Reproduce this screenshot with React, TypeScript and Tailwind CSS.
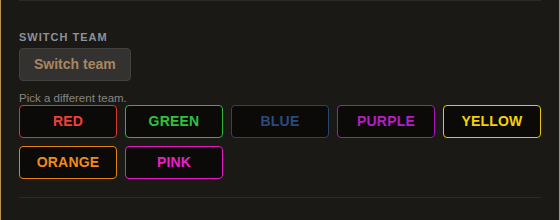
import React from 'react'

const TEAMS = [
  { name: 'RED', cls: 'border-[#d8392f] text-[#ee4136]' },
  { name: 'GREEN', cls: 'border-[#2bb637] text-[#2ec33b]' },
  { name: 'BLUE', cls: 'border-[#284470] text-[#2b4a7c]' },
  { name: 'PURPLE', cls: 'border-[#a915b8] text-[#b21fc4]' },
  { name: 'YELLOW', cls: 'border-[#e8c800] text-[#f2d300]' },
  { name: 'ORANGE', cls: 'border-[#e5820e] text-[#f28c12]' },
  { name: 'PINK', cls: 'border-[#e21cc0] text-[#ec1fc8]' },
]

export default function App() {
  return (
    <div
      className="w-[560px] h-[220px] bg-[#1b1915] border-l border-r border-[#b8905a] overflow-hidden"
      style={{ fontFamily: '"Liberation Sans", Arial, sans-serif' }}
    >
      <div className="mx-[18px] border-t border-b border-[#2c2a27] pt-[29px] pb-[18px]">
        <div className="text-[11px] font-bold tracking-[1px] text-[#8c919a] leading-[14px]">SWITCH TEAM</div>
        <button className="mt-[4px] h-[33px] px-[14px] rounded-[4px] bg-[#343230] border border-[#43413e] text-[14px] font-bold text-[#a8865f]">
          Switch team
        </button>
        <p className="mt-[10px] text-[11.5px] leading-[14px] text-[#858480]">Pick a different team.</p>
        <div className="grid grid-cols-5 gap-2">
          {TEAMS.map((t) => (
            <button
              key={t.name}
              className={`h-[33px] rounded-[4px] border bg-[#0b0a09] text-[14px] font-bold tracking-[0.2px] ${t.cls}`}
            >
              {t.name}
            </button>
          ))}
        </div>
      </div>
    </div>
  )
}
